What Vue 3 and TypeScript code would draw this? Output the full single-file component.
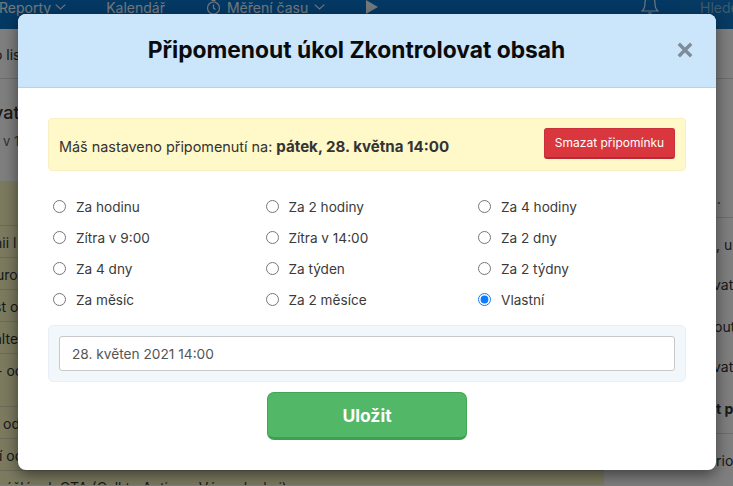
<script setup lang="ts">
import { ref } from 'vue'

const options: string[] = [
  'Za hodinu', 'Za 2 hodiny', 'Za 4 hodiny',
  'Zítra v 9:00', 'Zítra v 14:00', 'Za 2 dny',
  'Za 4 dny', 'Za týden', 'Za 2 týdny',
  'Za měsíc', 'Za 2 měsíce', 'Vlastní',
]
const picked = ref('Vlastní')
const date = ref('28. květen 2021 14:00')

const leftRows = [
  { h: 45, x: 0, t: '' },
  { h: 32, x: -6, t: 'nii l' },
  { h: 32, x: -4, t: 'urov' },
  { h: 32, x: -6, t: 'st o' },
  { h: 32, x: -6, t: 'alte' },
  { h: 53, x: -4, t: '- oc' },
  { h: 32, x: 3, t: 'od' },
  { h: 32, x: -1, t: 'í oc' },
]
const rightRows = [
  { h: 36, pad: 10, x: 105, t: '...', strong: false, line: false },
  { h: 50, pad: 19, x: 112, t: ', u', strong: false, line: true },
  { h: 42, pad: 10, x: 109, t: 'vat', strong: false, line: false },
  { h: 40, pad: 10, x: 110, t: 'out', strong: false, line: false },
  { h: 42, pad: 10, x: 109, t: 'vat', strong: false, line: false },
  { h: 42, pad: 10, x: 112, t: 't p', strong: true, line: false },
  { h: 52, pad: 19, x: 112, t: 'rion', strong: false, line: true },
]
</script>

<template>
  <div class="page">
    <header class="topbar">
      <nav class="nav">
        <span class="nav-item first">Reporty
          <svg class="chev" width="11" height="6" viewBox="0 0 11 6"><path d="M.7.7 5.500 5 10.300.7" fill="none" stroke="currentColor" stroke-width="1.100" /></svg>
        </span>
        <span class="nav-item kal">Kalendář</span>
        <span class="nav-item mer">
          <svg width="15" height="15" viewBox="0 0 15 15" fill="none" stroke="currentColor" stroke-width="1.200"><circle cx="7.500" cy="8" r="6" /><path d="M7.500 4.500v3.600l2 1.400M5.500.6h4" /></svg>
          Měření času
          <svg class="chev" width="11" height="6" viewBox="0 0 11 6"><path d="M.7.7 5.500 5 10.300.7" fill="none" stroke="currentColor" stroke-width="1.100" /></svg>
        </span>
        <svg class="play" width="12" height="14" viewBox="0 0 12 14"><path d="M0 0 12 7 0 14z" fill="currentColor" /></svg>
      </nav>
      <svg class="bell" width="18" height="14" viewBox="0 3 18 14" fill="none" stroke="currentColor" stroke-width="1.200"><path d="M1 14c3-2 3-5 3-8 0-4 2-6 5-6s5 2 5 6c0 3 0 6 3 8zM7.500 15.500c.5.800 2.500.8 3 0" /></svg>
      <div class="search">Hledej</div>
    </header>

    <div class="sub">
      <span class="crumb">o lis</span>
    </div>
    <div class="title">
      <span class="big">vat</span>
      <span class="meta">v 1</span>
    </div>
    <div class="table-wrap">
      <div class="olive">
        <div
          v-for="(r, i) in leftRows"
          :key="i"
          class="lrow"
          :style="{ height: r.h + 'px', paddingLeft: Math.max(r.x, 0) + 'px', textIndent: Math.min(r.x, 0) + 'px' }"
        >{{ r.t }}</div>
        <div class="lrow-last">ýšlének CTA (Call to Action - Výzva k akci)</div>
      </div>
      <div class="side">
        <div
          v-for="(r, i) in rightRows"
          :key="i"
          class="rrow"
          :class="{ strong: r.strong, line: r.line }"
          :style="{ height: r.h + 'px', paddingTop: r.pad + 'px', paddingLeft: r.x + 'px' }"
        >{{ r.t }}</div>
      </div>
    </div>

    <div class="overlay"></div>

    <section class="modal">
      <div class="modal-head">
        <h2>Připomenout úkol Zkontrolovat obsah</h2>
        <button class="close" aria-label="Zavřít">
          <svg width="16" height="16" viewBox="0 0 16 16"><path d="M1.800 1.800 14.200 14.200M14.200 1.800 1.800 14.200" stroke="currentColor" stroke-width="3.400" fill="none" /></svg>
        </button>
      </div>
      <div class="modal-body">
        <div class="notice">
          <p>Máš nastaveno připomenutí na: <strong>pátek, 28. května 14:00</strong></p>
          <button class="danger">Smazat připomínku</button>
        </div>
        <div class="options">
          <label v-for="o in options" :key="o" class="option">
            <input v-model="picked" type="radio" name="when" :value="o" />
            <span>{{ o }}</span>
          </label>
        </div>
        <div class="custom">
          <input v-model="date" class="date" type="text" />
        </div>
        <div class="actions">
          <button class="save">Uložit</button>
        </div>
      </div>
    </section>
  </div>
</template>

<style>
html, body { margin: 0; padding: 0; }
</style>

<style scoped>
.page {
  position: relative;
  width: 733px;
  height: 486px;
  overflow: hidden;
  background: #fff;
  font-family: Inter, "Liberation Sans", sans-serif;
  color: #333;
}
.topbar {
  height: 29px;
  box-sizing: border-box;
  padding-bottom: 15px;
  background: #0872c8;
  color: #e6f2fa;
  display: flex;
  align-items: center;
  font-size: 14px;
}
.nav { display: flex; align-items: center; flex: 1; }
.nav-item { display: inline-flex; align-items: center; gap: 4px; white-space: nowrap; }
.first { margin-left: -1px; }
.kal { margin-left: 40px; }
.mer { margin-left: 41px; gap: 6px; }
.play { margin-left: 41px; }
.bell { margin-right: 21px; }
.search {
  width: 53px;
  align-self: stretch;
  margin-bottom: -15px;
  background: #0e76c6;
  padding-left: 20px;
  box-sizing: border-box;
  color: #7db4dc;
  line-height: 15px;
  white-space: nowrap;
  overflow: hidden;
}
.sub { height: 31px; border-bottom: 1px solid #ddd; padding-top: 18px; font-size: 14px; line-height: 16px; }
.crumb { margin-left: -6px; }
.title { height: 102px; display: flex; flex-direction: column; }
.big { margin: 22px 0 0 -7px; font-size: 18px; line-height: 24px; font-weight: 500; }
.meta { margin: 8px 0 0 3px; font-size: 13px; line-height: 16px; color: #666; }
.table-wrap { display: flex; height: 304px; }
.olive { width: 604px; background: #f8f6c0; flex: none; overflow: hidden; }
.lrow {
  box-sizing: border-box;
  border-bottom: 1px solid #d8d6b0;
  padding-top: 9px;
  font-size: 14px;
  line-height: 16px;
  white-space: nowrap;
}
.lrow-last { padding: 9px 0 0 5px; font-size: 14px; line-height: 16px; white-space: nowrap; }
.side { flex: 1; overflow: hidden; }
.rrow {
  box-sizing: border-box;
  font-size: 14px;
  line-height: 16px;
  white-space: nowrap;
}
.rrow.line { border-top: 1px solid #ddd; }
.rrow.strong { font-weight: 700; }
.overlay { position: absolute; inset: 0; background: rgba(0, 0, 0, 0.5); }
.modal {
  position: absolute;
  left: 18px;
  top: 14px;
  width: 698px;
  height: 456px;
  background: #fff;
  border-radius: 8px;
  box-shadow: 0 5px 15px rgba(0, 0, 0, 0.5);
  overflow: hidden;
  display: flex;
  flex-direction: column;
}
.modal-head {
  position: relative;
  height: 74px;
  flex: none;
  box-sizing: border-box;
  background: #cbe5fa;
  border-bottom: 1px solid #b5d3ea;
  display: flex;
  align-items: center;
  justify-content: center;
  padding-right: 21px;
}
.modal-head h2 { margin: 0 0 1px; font-size: 22.800px; line-height: 28px; font-weight: 700; color: #0b0b0b; white-space: nowrap; }
.close {
  position: absolute;
  right: 23px;
  top: 28px;
  border: 0;
  padding: 0;
  background: none;
  color: #7e8c99;
  display: flex;
}
.modal-body { padding: 30px 30px 0; display: flex; flex-direction: column; }
.notice {
  height: 53px;
  box-sizing: border-box;
  background: #fff8c8;
  border: 1px solid #f8f0c0;
  border-radius: 4px;
  padding: 0 10px;
  display: flex;
  align-items: center;
  justify-content: space-between;
}
.notice p { margin: 3px 0 0; font-size: 14.400px; color: #333; white-space: nowrap; }
.notice strong { font-weight: 700; font-size: 15.100px; }
.danger {
  width: 131px;
  height: 31px;
  margin-top: -3px;
  box-sizing: border-box;
  background: #d9363e;
  border: 1px solid #c9303a;
  border-bottom: 2px solid #b52a33;
  border-radius: 3px;
  color: #fff;
  font: 12px Inter, "Liberation Sans", sans-serif;
  padding: 0;
}
.options {
  display: grid;
  grid-template-columns: 212.500px 212.500px 1fr;
  grid-auto-rows: 31px;
  padding: 20px 5px 0;
  height: 124px;
}
.option { display: flex; align-items: center; gap: 10px; font-size: 13.600px; color: #3a3a3a; }
.option input { margin: 0; width: 13px; height: 13px; accent-color: #0a7cff; flex: none; }
.custom {
  margin-top: 10px;
  height: 57px;
  box-sizing: border-box;
  background: #f2f7fc;
  border: 1px solid #e8eff6;
  border-radius: 5px;
  padding: 10px;
}
.date {
  display: block;
  width: 100%;
  height: 35px;
  box-sizing: border-box;
  border: 1px solid #c8c8c8;
  border-radius: 3px;
  padding: 0 12px;
  font: 13.700px Inter, "Liberation Sans", sans-serif;
  color: #555;
  outline: 0;
}
.actions { display: flex; justify-content: center; margin-top: 10px; }
.save {
  width: 200px;
  height: 48px;
  box-sizing: border-box;
  background: #52b766;
  border: 1px solid #43a556;
  border-bottom: 3px solid #3ea051;
  border-radius: 7px;
  color: #fff;
  font: 700 17.500px Inter, "Liberation Sans", sans-serif;
  padding: 0;
}
</style>
